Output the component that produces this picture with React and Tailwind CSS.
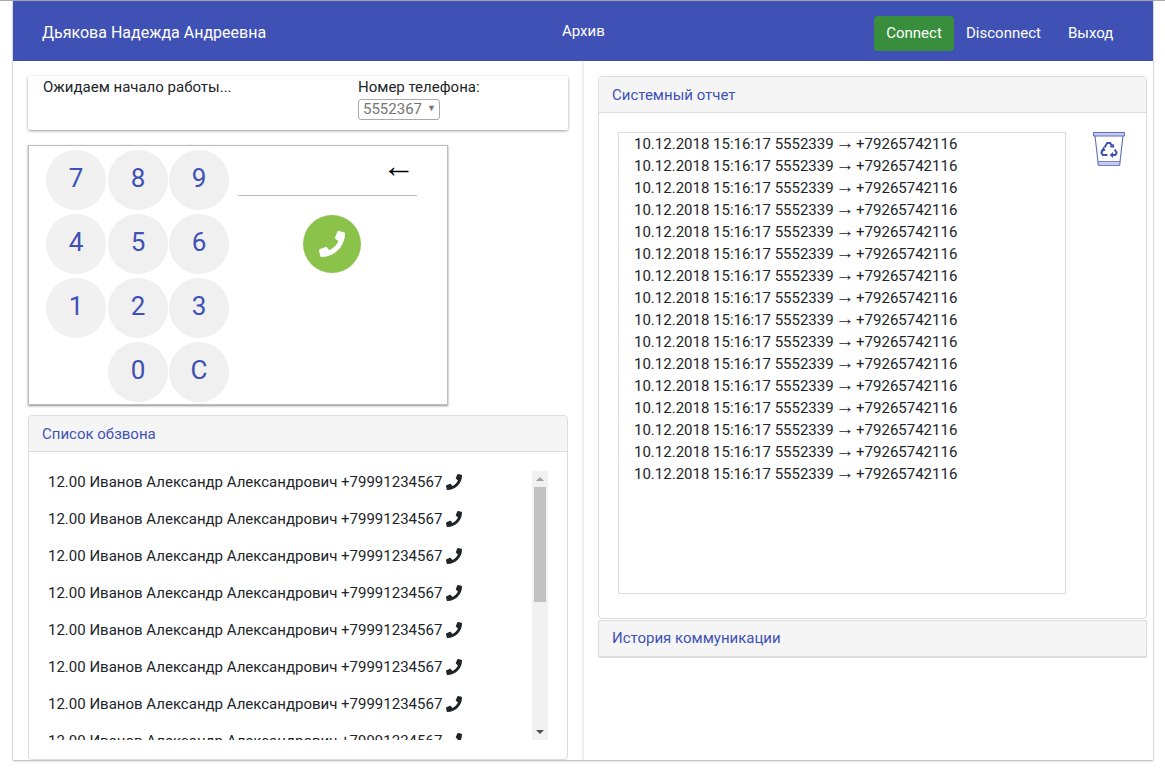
import React from 'react';
import { FaPhone } from 'react-icons/fa';

const keys = ['7', '8', '9', '4', '5', '6', '1', '2', '3', '', '0', 'C'];
const logLines = Array.from({ length: 16 }, (_, i) => i);
const callRows = Array.from({ length: 8 }, () => '12.00 Иванов Александр Александрович +79991234567');

const RecycleBin = () => (
  <svg width="32" height="35" viewBox="0 0 32 35" fill="none">
    <path d="M.5 .5h31v3.5H.5z" fill="#c5cae9" stroke="#5c6bc0" strokeWidth="1" />
    <path d="M2 4l3.4 29h21.2L30 4" stroke="#5c6bc0" strokeWidth="1.1" />
    <path d="M5 29.5h22l-.4 4H5.4z" fill="#c5cae9" stroke="#5c6bc0" strokeWidth="0.8" />
    <g stroke="#3f51b5" strokeWidth="2">
      <path d="M11.6 15.5L14.2 11h3l1.6 2.8" />
      <path d="M21.8 17.6l1.8 3.2-1.3 2.2H19.5" />
      <path d="M14.4 23H9.7l-1.3-2.2 1.7-3" />
    </g>
    <g fill="#3f51b5">
      <path d="M16.4 15l5 .8-.8-4.4z" />
      <path d="M20 20v6l-3.4-3z" />
      <path d="M7.4 19.4l5 -.6-1.6-4.2z" />
    </g>
  </svg>
);

const Keypad = () => (
  <div className="ml-[15px] mt-[15px] flex h-[260px] w-[420px] border border-[#bdbdbd] shadow-[0_1px_2px_rgba(0,0,0,0.45)]">
    <div className="ml-[17px] mt-[4px] grid grid-cols-[62px_61px_60px] auto-rows-[64px] content-start">
      {keys.map((k, i) =>
        k ? (
          <button
            key={i}
            className="flex h-[60px] w-[60px] items-center justify-center rounded-full bg-[#f0f0f0] pb-[3px] text-[26px] text-[#3f51b5]"
          >
            {k}
          </button>
        ) : (
          <div key={i} />
        )
      )}
    </div>
    <div className="ml-[9px] w-[179px]">
      <div className="flex h-[50px] justify-end border-b border-[#bdbdbd] pr-[2px] pt-[5px]">
        <span className="font-['Liberation_Sans'] text-[33px] leading-[30px] text-black">←</span>
      </div>
      <div className="ml-[65px] mt-[19px] flex h-[58px] w-[58px] items-center justify-center rounded-full bg-[#8bc34a]">
        <FaPhone className="text-[26px] text-white" />
      </div>
    </div>
  </div>
);

const App = () => {
  return (
    <div className="h-[768px] overflow-hidden bg-white font-['Roboto','Liberation_Sans',sans-serif] text-[15px] text-[#212529]">
      <div className="h-px bg-[#aaaaaa]" />
      <div className="mx-[13px] h-[759px] w-[1140px] shadow-[0_1px_2px_rgba(0,0,0,0.3),-1px_0_1px_rgba(0,0,0,0.06),1px_0_1px_rgba(0,0,0,0.06)]">
        <header className="flex h-[60px] items-center bg-[#3f51b5] pl-[29px] pt-[4px] text-white">
          <div className="w-[520px] text-[16px]">Дьякова Надежда Андреевна</div>
          <div className="-mt-[3px] w-[312px]">Архив</div>
          <button className="h-[35px] w-[80px] rounded-[4px] bg-[#388e3c] text-white">Connect</button>
          <span className="ml-[12px]">Disconnect</span>
          <span className="ml-[27px]">Выход</span>
        </header>

        <div className="flex h-[699px]">
          <div className="w-[571px] border-r-2 border-[#eeeeee]">
            <div className="ml-[15px] mt-[15px] flex h-[54px] w-[540px] rounded-[2px] pl-[15px] shadow-[0_1px_3px_rgba(0,0,0,0.4)]">
              <div className="w-[315px]">Ожидаем начало работы...</div>
              <div>
                <div>Номер телефона:</div>
                <div className="flex h-[21px] w-[82px] items-center rounded-[3px] border border-[#a9a9a9] pl-[4px] text-[#757575]">
                  5552367
                  <span className="ml-[5px] text-[9px]">▼</span>
                </div>
              </div>
            </div>

            <Keypad />

            <section className="ml-[15px] mt-[10px] h-[345px] w-[540px] rounded-[4px] border border-[#dddddd]">
              <div className="flex h-[36px] items-center rounded-t-[4px] border-b border-[#dddddd] bg-[#f5f5f5] pl-[13px] pt-[2px] text-[#3f51b5]">
                Список обзвона
              </div>
              <div className="ml-[19px] mt-[19px] flex h-[269px] w-[500px]">
                <ul className="h-[269px] flex-1 overflow-hidden">
                  {callRows.map((row, i) => (
                    <li key={i} className="flex h-[37px] items-start pt-[1px] leading-[20px]">
                      {row}
                      <FaPhone className="ml-[4px] mt-[2px] text-[16px] text-[#212529]" />
                    </li>
                  ))}
                </ul>
                <div className="flex w-[16px] flex-col items-center bg-[#f1f1f1]">
                  <div className="h-[16px] pt-[6px]">
                    <div className="h-0 w-0 border-x-[4px] border-b-[4px] border-x-transparent border-b-[#a3a3a3]" />
                  </div>
                  <div className="h-[115px] w-[12px] bg-[#c1c1c1]" />
                  <div className="flex-1" />
                  <div className="h-[16px] pt-[6px]">
                    <div className="h-0 w-0 border-x-[4px] border-t-[4px] border-x-transparent border-t-[#505050]" />
                  </div>
                </div>
              </div>
            </section>
          </div>

          <div className="flex-1 pl-[14px] pt-[15px]">
            <section className="h-[543px] w-[549px] rounded-[4px] border border-[#dddddd]">
              <div className="flex h-[36px] items-center rounded-t-[4px] border-b border-[#dddddd] bg-[#f5f5f5] pl-[13px] pt-[2px] text-[#3f51b5]">
                Системный отчет
              </div>
              <div className="ml-[19px] mt-[19px] flex items-start">
                <div className="h-[462px] w-[448px] border border-[#dddddd] pl-[15px]">
                  {logLines.map((i) => (
                    <div key={i} className="h-[22px] leading-[22px]">
                      10.12.2018 15:16:17 5552339 <span className="-mx-[2px] text-[19px] leading-none">→</span> +79265742116
                    </div>
                  ))}
                </div>
                <div className="ml-[27px]">
                  <RecycleBin />
                </div>
              </div>
            </section>
            <div className="mt-px flex h-[37px] w-[549px] items-center rounded-[2px] border border-[#dddddd] bg-[#f5f5f5] pl-[13px] text-[#3f51b5] shadow-[0_1px_1px_rgba(0,0,0,0.15)]">
              История коммуникации
            </div>
          </div>
        </div>
      </div>
    </div>
  );
};

export default App;
